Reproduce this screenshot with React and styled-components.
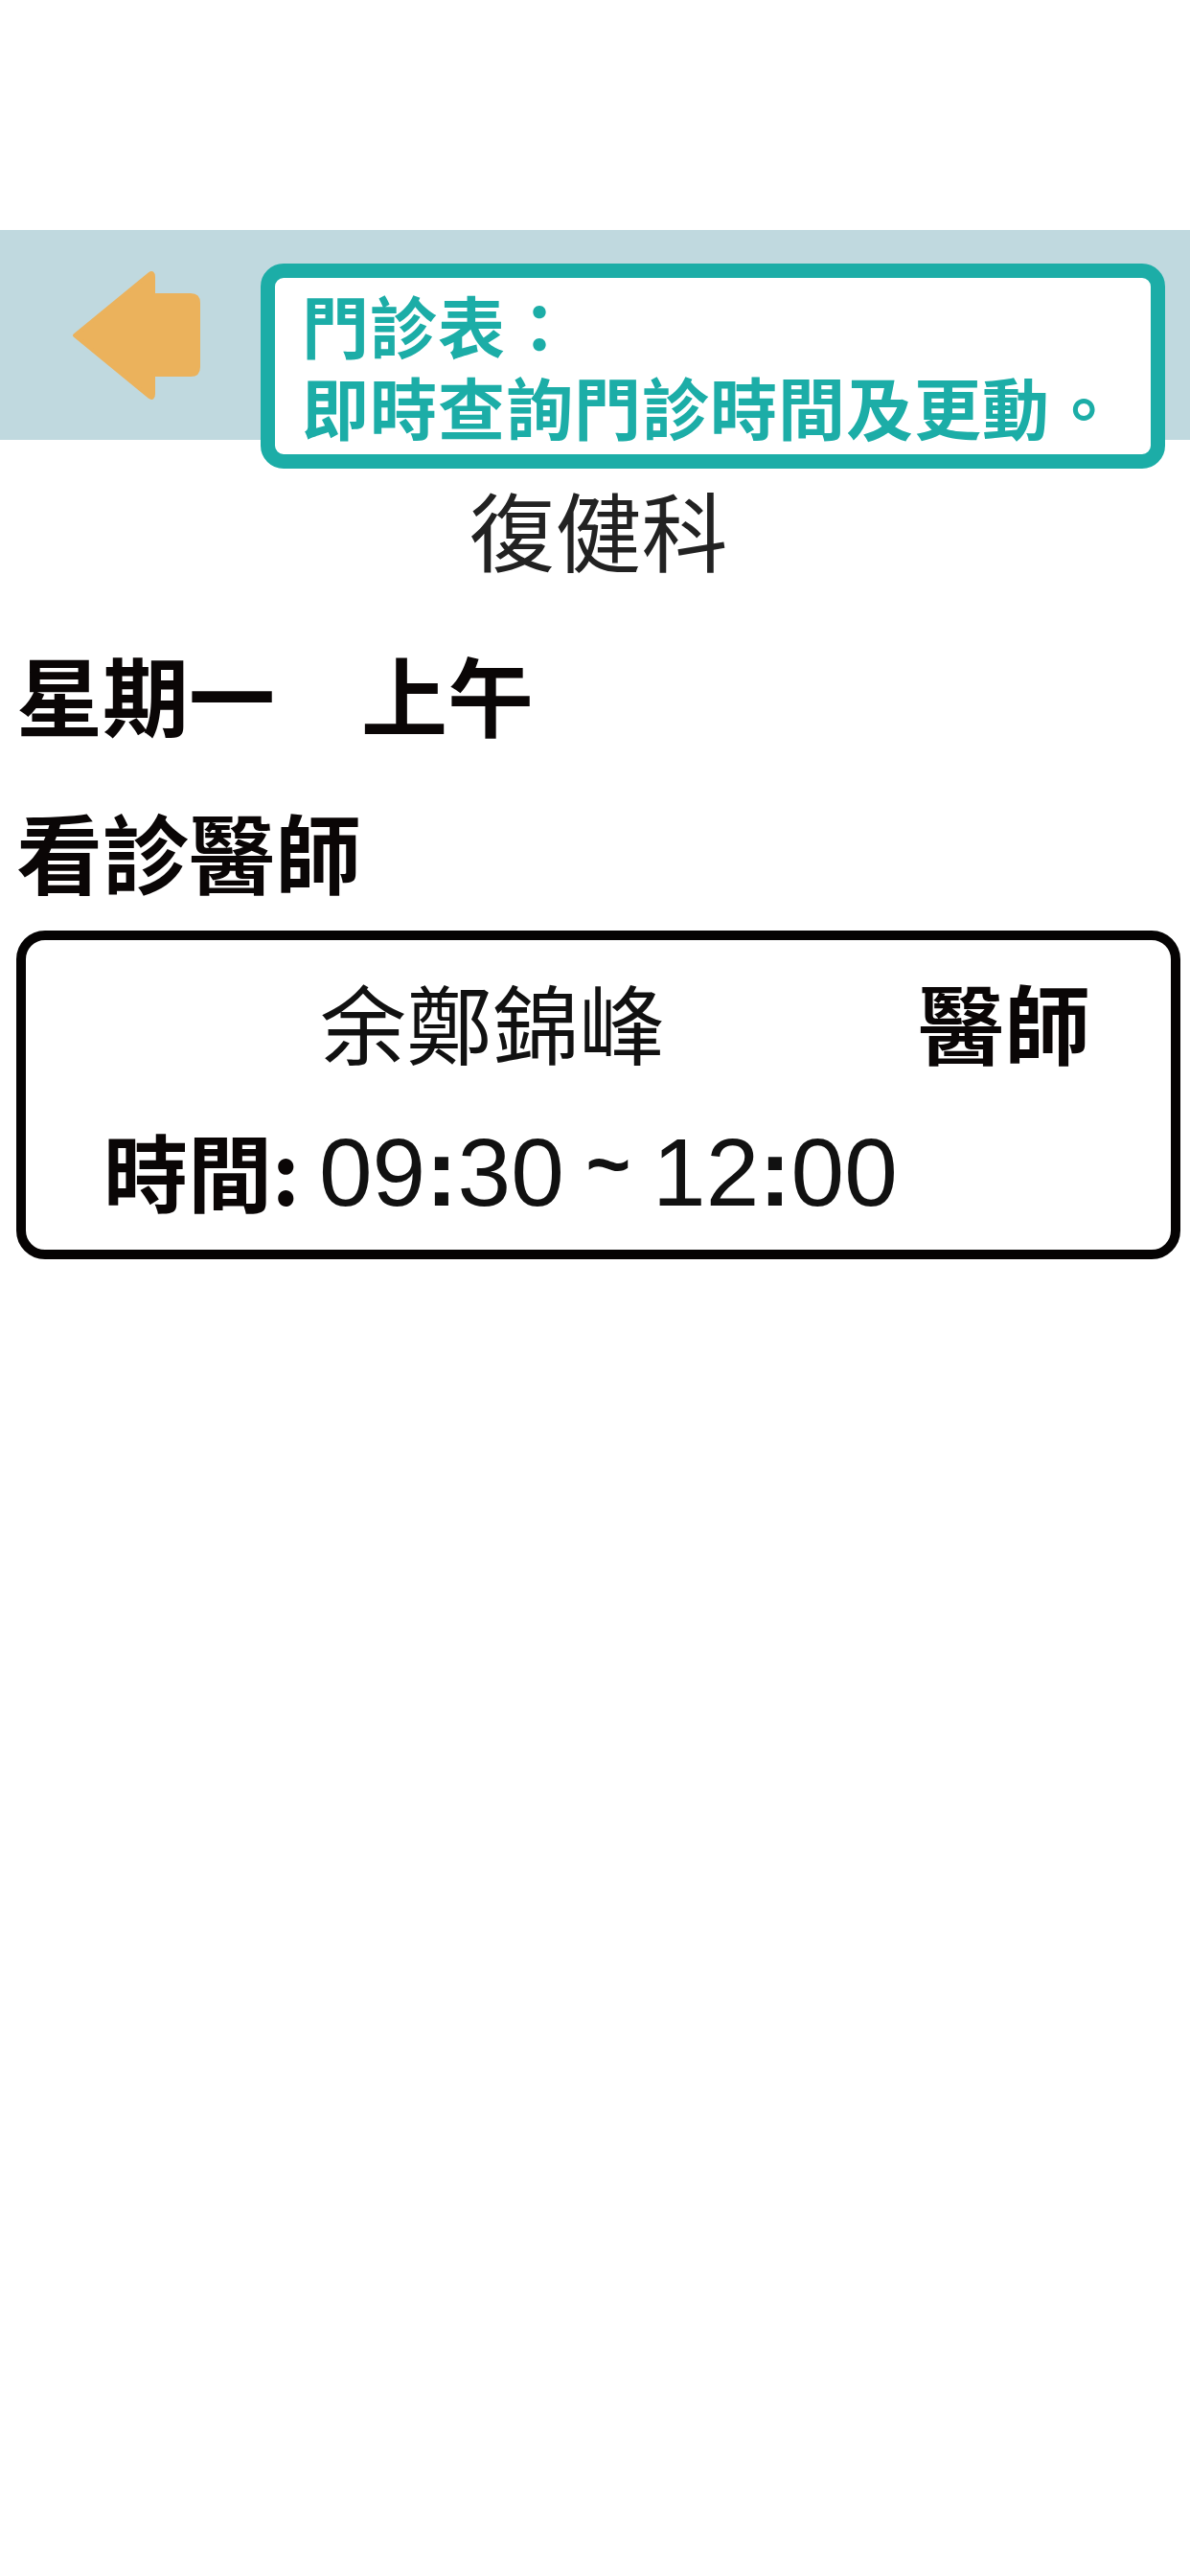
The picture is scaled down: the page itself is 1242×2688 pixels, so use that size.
import React from 'react';
import styled, { createGlobalStyle } from 'styled-components';

const GlobalStyle = createGlobalStyle`
  html, body {
    margin: 0;
    padding: 0;
    background: #ffffff;
  }
  body {
    font-family: "Noto Sans CJK TC", "Noto Sans", sans-serif;
    color: #111;
  }
`;

const BackArrow = () => (
  <ArrowIcon viewBox="0 0 135 136" aria-label="back">
    <path
      d="M4 68 L82 4 Q86 1 86 7 L86 26 L125 26 Q133 26 133 34 L133 101 Q133 109 125 109 L86 109 L86 129 Q86 135 82 132 Z"
      fill="#ebb25c"
      stroke="#ebb25c"
      strokeWidth="4"
      strokeLinejoin="round"
    />
  </ArrowIcon>
);

const App = () => {
  return (
    <Page>
      <GlobalStyle />
      <StatusSpace />
      <Header>
        <BackArrow />
        <NoticeBox>
          <p>門診表：</p>
          <p>即時查詢門診時間及更動。</p>
        </NoticeBox>
      </Header>
      <Content>
        <Department>復健科</Department>
        <SectionTitle gap={63}>星期一　上午</SectionTitle>
        <SectionTitle gap={54}>看診醫師</SectionTitle>
        <DoctorCard>
          <NameRow>
            <DoctorName>余鄭錦峰</DoctorName>
            <DoctorTitle>醫師</DoctorTitle>
          </NameRow>
          <TimeRow>
            <TimeLabel>時間:</TimeLabel>
            <TimeValue>
              09<b>:</b>30 <Tilde>~</Tilde> 12<b>:</b>00
            </TimeValue>
          </TimeRow>
        </DoctorCard>
      </Content>
    </Page>
  );
};

export default App;

/** full page, fixed phone width */
const Page = styled.div`
  width: 1242px;
  min-height: 2688px;
  background: #fff;
`;

/** empty white area where the status bar sits */
const StatusSpace = styled.div`
  height: 240px;
`;

/** light blue band with the arrow and the notice box,
 * the box hangs over the bottom edge of the band
 */
const Header = styled.div`
  height: 219px;
  background: #c0d9df;
  display: flex;
  align-items: center;
  padding-left: 74px;
  gap: 63px;
  box-sizing: border-box;
`;

const ArrowIcon = styled.svg`
  width: 135px;
  height: 136px;
  flex-shrink: 0;
`;

const NoticeBox = styled.div`
  align-self: flex-start;
  margin-top: 35px;
  width: 944px;
  height: 214px;
  flex-shrink: 0;
  box-sizing: border-box;
  border: 15px solid #1cada7;
  border-radius: 24px;
  background: #fff;
  padding: 6px 0 0 28px;
  position: relative;
  z-index: 1;

  > p {
    margin: 0;
    font-size: 70px;
    line-height: 85px;
    letter-spacing: 1px;
    font-weight: 700;
    color: #1cada7;
    white-space: nowrap;
  }
`;

const Content = styled.div`
  padding: 0 10px 0 17px;
  display: flex;
  flex-direction: column;
`;

const Department = styled.h1`
  margin: 38px 0 0;
  text-align: center;
  font-size: 90px;
  line-height: 108px;
  font-weight: 400;
  color: #222;
`;

const SectionTitle = styled.h2`
  margin: ${(p) => p.gap}px 0 0;
  font-size: 90px;
  line-height: 110px;
  font-weight: 700;
  color: #0a0606;
`;

/** rounded black bordered card for the doctor */
const DoctorCard = styled.div`
  margin-top: 29px;
  height: 343px;
  box-sizing: border-box;
  border: 10px solid #050303;
  border-radius: 30px;
  display: flex;
  flex-direction: column;
`;

const NameRow = styled.div`
  display: flex;
  align-items: baseline;
  padding: 30px 84px 0 307px;
`;

const DoctorName = styled.span`
  font-size: 90px;
  line-height: 108px;
  font-weight: 400;
  color: #111;
`;

const DoctorTitle = styled.span`
  margin-left: auto;
  font-size: 90px;
  line-height: 108px;
  font-weight: 700;
  color: #0a0606;
`;

const TimeRow = styled.div`
  display: flex;
  align-items: baseline;
  padding: 42px 0 0 81px;
`;

const TimeLabel = styled.span`
  font-size: 88px;
  line-height: 108px;
  font-weight: 700;
  color: #0a0606;
  width: 225px;
`;

const TimeValue = styled.span`
  font-family: "Liberation Sans", Arial, sans-serif;
  font-size: 100px;
  line-height: 108px;
  color: #111;

  > b {
    font-weight: 700;
  }
`;

/** the tilde is small, bold and sits high in the reference */
const Tilde = styled.span`
  font-size: 80px;
  font-weight: 700;
  vertical-align: 16px;
  margin: 0 -5px;
`;
